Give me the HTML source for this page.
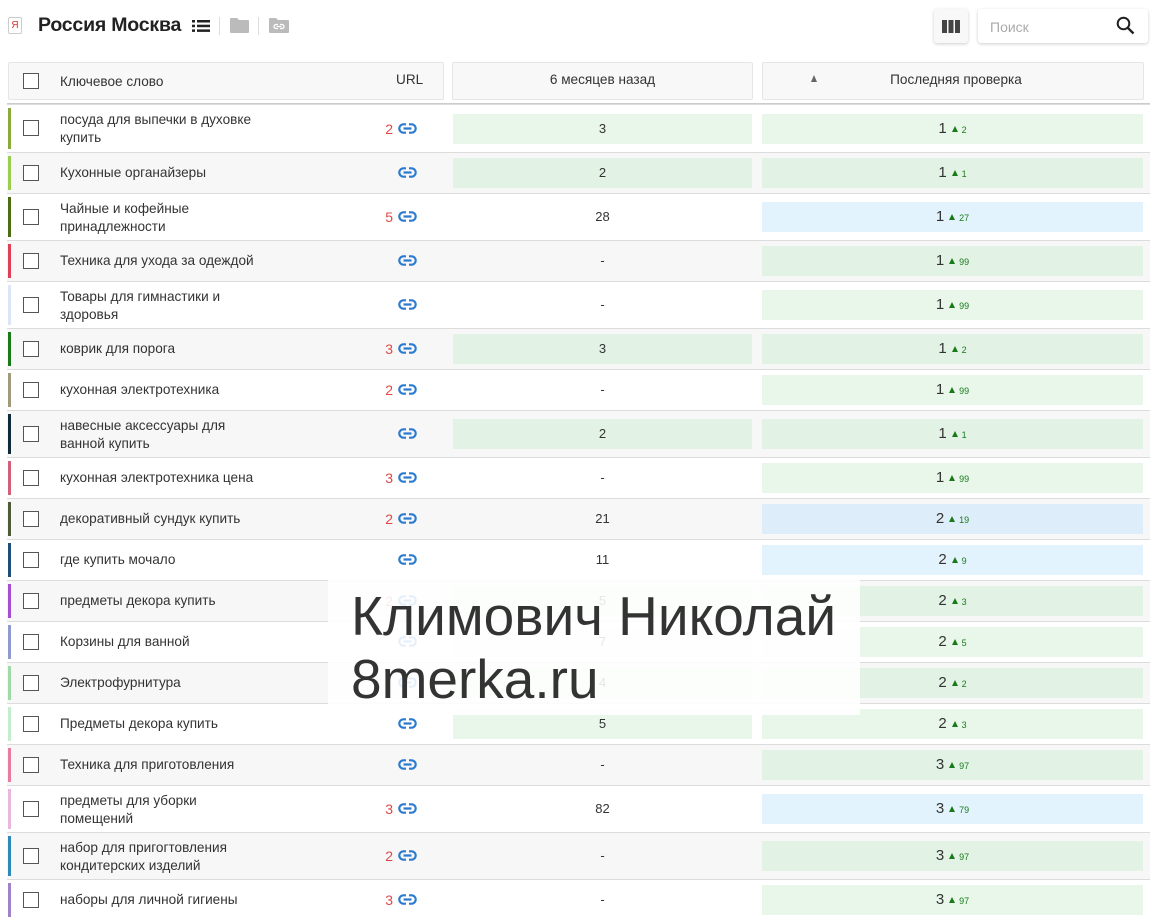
<!DOCTYPE html>
<html><head><meta charset="utf-8"><style>
*{box-sizing:border-box;margin:0;padding:0}
body{width:1167px;height:913px;overflow:hidden;background:#fff;font-family:"Liberation Sans","DejaVu Sans",sans-serif;color:#333;font-size:13.6px;position:relative}
.a{position:absolute}
.hdr{background:#f8f8f8;border:1px solid #e6e6e6;border-radius:2px;height:38px;top:62px}
.cb{position:absolute;left:23px;width:16px;height:16px;border:1px solid #555;background:#fff}
.row{position:absolute;left:7px;width:1143px;border-top:1px solid #dcdcdc}
.row.g{background:#f7f7f7}
.bar{position:absolute;left:1px;width:3px;top:3px;bottom:3px}
.kw{position:absolute;left:53px;line-height:18px;color:#333}
.cnt{position:absolute;right:757px;color:#e04848;font-size:14px}
.lk{position:absolute;left:391px}
.cell{position:absolute;height:30px;line-height:30px;text-align:center;font-size:13px}
.mid{left:446px;width:299px}
.last{left:755px;width:381px;font-size:15px}
.gr{background:#e8f7ea}.row.g .gr{background:#e2f3e6}
.bl{background:#e3f3fd}.row.g .bl{background:#ddedf9}
.d{color:#1a7a1a;font-size:9px}
.d:before{content:"";display:inline-block;width:0;height:0;border-left:3.5px solid transparent;border-right:3.5px solid transparent;border-bottom:6px solid #1a7a1a;margin:0 4px 1px 5px}
</style></head><body>
<div class="a" style="left:8px;top:17px;width:14px;height:17px;border:1px solid #ccc;border-radius:2px;color:#d33;font-size:10px;text-align:center;line-height:15px">Я</div>
<div class="a" style="left:38px;top:14px;font-size:19.5px;font-weight:bold;color:#222;letter-spacing:-0.2px">Россия Москва</div>
<svg class="a" style="left:192px;top:20px" width="18" height="12"><g fill="#222"><rect x="0" y="0" width="3" height="2.5"/><rect x="5" y="0" width="13" height="2.5"/><rect x="0" y="4.7" width="3" height="2.5"/><rect x="5" y="4.7" width="13" height="2.5"/><rect x="0" y="9.4" width="3" height="2.5"/><rect x="5" y="9.4" width="13" height="2.5"/></g></svg>
<div class="a" style="left:219px;top:17px;width:1px;height:18px;background:#ddd"></div>
<svg class="a" style="left:229px;top:17px" width="21" height="17"><path d="M1 2 Q1 1 2 1 H8 L10 3 H19 Q20 3 20 4 V15 Q20 16 19 16 H2 Q1 16 1 15Z" fill="#bbb"/></svg>
<div class="a" style="left:258px;top:17px;width:1px;height:18px;background:#ddd"></div>
<svg class="a" style="left:268px;top:17px" width="22" height="17"><path d="M1 2 Q1 1 2 1 H8 L10 3 H20 Q21 3 21 4 V15 Q21 16 20 16 H2 Q1 16 1 15Z" fill="#bbb"/><path d="M10 7.5H8a2 2 0 0 0 0 4H10M12 7.5H14a2 2 0 0 1 0 4H12M8.5 9.5H13.5" fill="none" stroke="#fff" stroke-width="1.3"/></svg>
<div class="a" style="left:934px;top:9px;width:34px;height:34px;background:#f8f8f8;border-radius:3px;box-shadow:0 1px 3px rgba(0,0,0,.2)"></div>
<svg class="a" style="left:942px;top:20px" width="18" height="13"><g fill="#444"><rect x="0" y="0" width="5" height="13"/><rect x="6.5" y="0" width="5" height="13"/><rect x="13" y="0" width="5" height="13"/></g></svg>
<div class="a" style="left:978px;top:9px;width:170px;height:34px;background:#fff;border-radius:3px;box-shadow:0 1px 3px rgba(0,0,0,.2)"></div>
<div class="a" style="left:990px;top:19px;color:#aaa;font-size:14px">Поиск</div>
<svg class="a" style="left:1116px;top:16px" width="20" height="20"><circle cx="7.5" cy="7.5" r="5.8" fill="none" stroke="#222" stroke-width="2"/><line x1="11.8" y1="11.8" x2="17.5" y2="17.5" stroke="#222" stroke-width="2.4"/></svg>

<div class="a hdr" style="left:8px;width:436px"></div>
<div class="cb" style="top:73px"></div>
<div class="a" style="left:60px;top:74px">Ключевое слово</div>
<div class="a" style="left:396px;top:72px">URL</div>
<div class="a hdr" style="left:452px;width:301px"></div>
<div class="a" style="left:452px;width:301px;top:72px;text-align:center">6 месяцев назад</div>
<div class="a hdr" style="left:762px;width:382px"></div>
<div class="a" style="left:811px;top:75px;width:0;height:0;border-left:3.5px solid transparent;border-right:3.5px solid transparent;border-bottom:7px solid #666"></div>
<div class="a" style="left:762px;width:388px;top:72px;text-align:center">Последняя проверка</div>
<div class="a" style="left:7px;top:103px;width:1143px;height:1px;background:#ccc"></div>

<svg width="0" height="0" style="position:absolute"><defs><symbol id="l" viewBox="0 0 19 11"><path d="M8 1.3H5.5a4.2 4.2 0 0 0 0 8.4H8M11 1.3H13.5a4.2 4.2 0 0 1 0 8.4H11M5.5 5.5H13.5" fill="none" stroke="#2b7bd0" stroke-width="2.2"/></symbol></defs></svg>

<div class="row" style="top:104px;height:48px"><div class="bar" style="background:#8aab3b"></div><div class="cb" style="top:15px;left:16px"></div><div class="kw" style="top:6px">посуда для выпечки в духовке<br>купить</div><div class="cnt" style="top:16px">2</div><svg class="lk" style="top:18px" width="19" height="11"><use href="#l"/></svg><div class="cell mid gr" style="top:9px">3</div><div class="cell last gr" style="top:9px">1<span class="d">2</span></div></div>
<div class="row g" style="top:152px;height:41px"><div class="bar" style="background:#9acd50"></div><div class="cb" style="top:12px;left:16px"></div><div class="kw" style="top:11px">Кухонные органайзеры</div><svg class="lk" style="top:14px" width="19" height="11"><use href="#l"/></svg><div class="cell mid gr" style="top:5px">2</div><div class="cell last gr" style="top:5px">1<span class="d">1</span></div></div>
<div class="row" style="top:193px;height:47px"><div class="bar" style="background:#4e6b16"></div><div class="cb" style="top:15px;left:16px"></div><div class="kw" style="top:6px">Чайные и кофейные<br>принадлежности</div><div class="cnt" style="top:15px">5</div><svg class="lk" style="top:17px" width="19" height="11"><use href="#l"/></svg><div class="cell mid" style="top:8px">28</div><div class="cell last bl" style="top:8px">1<span class="d">27</span></div></div>
<div class="row g" style="top:240px;height:41px"><div class="bar" style="background:#e04055"></div><div class="cb" style="top:12px;left:16px"></div><div class="kw" style="top:11px">Техника для ухода за одеждой</div><svg class="lk" style="top:14px" width="19" height="11"><use href="#l"/></svg><div class="cell mid" style="top:5px">-</div><div class="cell last gr" style="top:5px">1<span class="d">99</span></div></div>
<div class="row" style="top:281px;height:47px"><div class="bar" style="background:#dde6f8"></div><div class="cb" style="top:15px;left:16px"></div><div class="kw" style="top:6px">Товары для гимнастики и<br>здоровья</div><svg class="lk" style="top:17px" width="19" height="11"><use href="#l"/></svg><div class="cell mid" style="top:8px">-</div><div class="cell last gr" style="top:8px">1<span class="d">99</span></div></div>
<div class="row g" style="top:328px;height:41px"><div class="bar" style="background:#1a7a1a"></div><div class="cb" style="top:12px;left:16px"></div><div class="kw" style="top:11px">коврик для порога</div><div class="cnt" style="top:12px">3</div><svg class="lk" style="top:14px" width="19" height="11"><use href="#l"/></svg><div class="cell mid gr" style="top:5px">3</div><div class="cell last gr" style="top:5px">1<span class="d">2</span></div></div>
<div class="row" style="top:369px;height:41px"><div class="bar" style="background:#a09a7c"></div><div class="cb" style="top:12px;left:16px"></div><div class="kw" style="top:11px">кухонная электротехника</div><div class="cnt" style="top:12px">2</div><svg class="lk" style="top:14px" width="19" height="11"><use href="#l"/></svg><div class="cell mid" style="top:5px">-</div><div class="cell last gr" style="top:5px">1<span class="d">99</span></div></div>
<div class="row g" style="top:410px;height:47px"><div class="bar" style="background:#0f2a3a"></div><div class="cb" style="top:15px;left:16px"></div><div class="kw" style="top:6px">навесные аксессуары для<br>ванной купить</div><svg class="lk" style="top:17px" width="19" height="11"><use href="#l"/></svg><div class="cell mid gr" style="top:8px">2</div><div class="cell last gr" style="top:8px">1<span class="d">1</span></div></div>
<div class="row" style="top:457px;height:41px"><div class="bar" style="background:#d2607a"></div><div class="cb" style="top:12px;left:16px"></div><div class="kw" style="top:11px">кухонная электротехника цена</div><div class="cnt" style="top:12px">3</div><svg class="lk" style="top:14px" width="19" height="11"><use href="#l"/></svg><div class="cell mid" style="top:5px">-</div><div class="cell last gr" style="top:5px">1<span class="d">99</span></div></div>
<div class="row g" style="top:498px;height:41px"><div class="bar" style="background:#4e5b3a"></div><div class="cb" style="top:12px;left:16px"></div><div class="kw" style="top:11px">декоративный сундук купить</div><div class="cnt" style="top:12px">2</div><svg class="lk" style="top:14px" width="19" height="11"><use href="#l"/></svg><div class="cell mid" style="top:5px">21</div><div class="cell last bl" style="top:5px">2<span class="d">19</span></div></div>
<div class="row" style="top:539px;height:41px"><div class="bar" style="background:#1f4e79"></div><div class="cb" style="top:12px;left:16px"></div><div class="kw" style="top:11px">где купить мочало</div><svg class="lk" style="top:14px" width="19" height="11"><use href="#l"/></svg><div class="cell mid" style="top:5px">11</div><div class="cell last bl" style="top:5px">2<span class="d">9</span></div></div>
<div class="row g" style="top:580px;height:41px"><div class="bar" style="background:#a64fd0"></div><div class="cb" style="top:12px;left:16px"></div><div class="kw" style="top:11px">предметы декора купить</div><div class="cnt" style="top:12px">2</div><svg class="lk" style="top:14px" width="19" height="11"><use href="#l"/></svg><div class="cell mid gr" style="top:5px">5</div><div class="cell last gr" style="top:5px">2<span class="d">3</span></div></div>
<div class="row" style="top:621px;height:41px"><div class="bar" style="background:#8e9ad0"></div><div class="cb" style="top:12px;left:16px"></div><div class="kw" style="top:11px">Корзины для ванной</div><svg class="lk" style="top:14px" width="19" height="11"><use href="#l"/></svg><div class="cell mid gr" style="top:5px">7</div><div class="cell last gr" style="top:5px">2<span class="d">5</span></div></div>
<div class="row g" style="top:662px;height:41px"><div class="bar" style="background:#9fd9a8"></div><div class="cb" style="top:12px;left:16px"></div><div class="kw" style="top:11px">Электрофурнитура</div><svg class="lk" style="top:14px" width="19" height="11"><use href="#l"/></svg><div class="cell mid gr" style="top:5px">4</div><div class="cell last gr" style="top:5px">2<span class="d">2</span></div></div>
<div class="row" style="top:703px;height:41px"><div class="bar" style="background:#c6ecd0"></div><div class="cb" style="top:12px;left:16px"></div><div class="kw" style="top:11px">Предметы декора купить</div><svg class="lk" style="top:14px" width="19" height="11"><use href="#l"/></svg><div class="cell mid gr" style="top:5px">5</div><div class="cell last gr" style="top:5px">2<span class="d">3</span></div></div>
<div class="row g" style="top:744px;height:41px"><div class="bar" style="background:#e87ca0"></div><div class="cb" style="top:12px;left:16px"></div><div class="kw" style="top:11px">Техника для приготовления</div><svg class="lk" style="top:14px" width="19" height="11"><use href="#l"/></svg><div class="cell mid" style="top:5px">-</div><div class="cell last gr" style="top:5px">3<span class="d">97</span></div></div>
<div class="row" style="top:785px;height:47px"><div class="bar" style="background:#e8b8e0"></div><div class="cb" style="top:15px;left:16px"></div><div class="kw" style="top:6px">предметы для уборки<br>помещений</div><div class="cnt" style="top:15px">3</div><svg class="lk" style="top:17px" width="19" height="11"><use href="#l"/></svg><div class="cell mid" style="top:8px">82</div><div class="cell last bl" style="top:8px">3<span class="d">79</span></div></div>
<div class="row g" style="top:832px;height:47px"><div class="bar" style="background:#2e8ab8"></div><div class="cb" style="top:15px;left:16px"></div><div class="kw" style="top:6px">набор для пригогтовления<br>кондитерских изделий</div><div class="cnt" style="top:15px">2</div><svg class="lk" style="top:17px" width="19" height="11"><use href="#l"/></svg><div class="cell mid" style="top:8px">-</div><div class="cell last gr" style="top:8px">3<span class="d">97</span></div></div>
<div class="row" style="top:879px;height:41px"><div class="bar" style="background:#a082c8"></div><div class="cb" style="top:12px;left:16px"></div><div class="kw" style="top:11px">наборы для личной гигиены</div><div class="cnt" style="top:12px">3</div><svg class="lk" style="top:14px" width="19" height="11"><use href="#l"/></svg><div class="cell mid" style="top:5px">-</div><div class="cell last gr" style="top:5px">3<span class="d">97</span></div></div>

<div class="a" style="left:328px;top:578px;width:532px;height:137px;background:rgba(255,255,255,.88)"></div>
<div class="a" style="left:351px;top:585px;font-size:55px;line-height:63px;color:#333">Климович Николай<br>8merka.ru</div>
</body></html>
